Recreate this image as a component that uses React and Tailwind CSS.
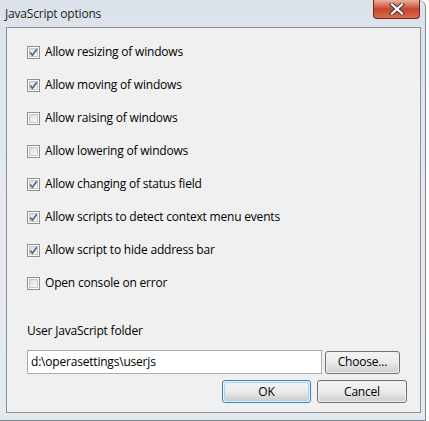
import React from 'react';

const options = [
  { label: 'Allow resizing of windows', checked: true },
  { label: 'Allow moving of windows', checked: true },
  { label: 'Allow raising of windows', checked: false },
  { label: 'Allow lowering of windows', checked: false },
  { label: 'Allow changing of status field', checked: true },
  { label: 'Allow scripts to detect context menu events', checked: true },
  { label: 'Allow script to hide address bar', checked: true },
  { label: 'Open console on error', checked: false },
];

const font = { fontFamily: '"Open Sans", "Noto Sans", sans-serif' };

const Checkbox = ({ checked }) => (
  <div className="w-[13px] h-[13px] border border-[#8e8f8f] bg-white p-[1px] shrink-0">
    <div className="relative w-full h-full border border-[#c6c6c6] bg-gradient-to-br from-[#dcdcdc] to-[#fbfbfb]">
      {checked && (
        <svg className="absolute -left-[1px] -top-[1px]" width="9" height="9" viewBox="0 0 9 9">
          <path d="M1.2 4.6 L3.4 7.2 L7.8 1.2" fill="none" stroke="#4b5f95" strokeWidth="1.6" />
        </svg>
      )}
    </div>
  </div>
);

const Button = ({ children, primary, className }) => (
  <button
    className={`h-[23px] rounded-[3px] border text-[12px] text-black p-[1px] ${primary ? 'border-[#3c7fb1]' : 'border-[#707070]'} ${className}`}
  >
    <div
      className={`h-full rounded-[2px] flex items-center justify-center bg-gradient-to-b from-[#f2f2f2] via-[#ebebeb] to-[#cfcfcf] ${primary ? 'border border-[#9fd6f5]' : ''}`}
    >
      {children}
    </div>
  </button>
);

export default function App() {
  return (
    <div className="w-[429px] h-[421px] bg-white overflow-hidden tracking-[-0.2px]" style={font}>
      <div className="relative w-[426px] h-[421px] rounded-tr-[7px] border-r border-b border-[#7d8892] bg-gradient-to-b from-[#dbe2ea] via-[#e6eaef] to-[#e4e9ee] flex flex-col">
        {/* title bar */}
        <div className="h-[27px] flex items-center pl-[5px] text-[12px] text-[#1e1e1e] shrink-0">
          JavaScript options
        </div>
        <div className="absolute left-[373px] top-0 w-[47px] h-[19px] rounded-b-[4px] border border-t-0 border-[#6b2a1f] bg-gradient-to-b from-[#eab0a0] via-[#c8442c] to-[#d86a4c] flex items-center justify-center">
          <svg width="16" height="12" viewBox="0 0 16 12">
            <path d="M3 1.5 L13 10.5 M13 1.5 L3 10.5" stroke="#3b3b3b" strokeWidth="4.2" strokeLinecap="square" />
            <path d="M3 1.5 L13 10.5 M13 1.5 L3 10.5" stroke="#ffffff" strokeWidth="2.2" strokeLinecap="square" />
          </svg>
        </div>

        {/* content panel */}
        <div className="ml-[6px] w-[415px] h-[386px] border border-[#8a9099] bg-[#f0f0f0] flex flex-col pl-[20px] pt-[8px]">
          {options.map((o) => (
            <div key={o.label} className="h-[33px] flex items-center gap-[5px] text-[12px] text-black">
              <Checkbox checked={o.checked} />
              <span className="leading-none -mt-[1px]">{o.label}</span>
            </div>
          ))}
          <div className="h-[31px] flex items-end text-[12px] text-black leading-none pb-[1px] mt-[7px]">
            User JavaScript folder
          </div>
          <div className="flex items-center mt-[12px] gap-[3px]">
            <div className="w-[295px] h-[24px] border border-[#abadb3] border-t-[#a3a6ad] bg-white flex items-center pl-[3px] text-[12px] text-black">
              d:\operasettings\userjs
            </div>
            <Button className="w-[75px]">Choose...</Button>
          </div>
          <div className="flex mt-[6px] ml-[195px] gap-[6px]">
            <Button primary className="w-[89px]">OK</Button>
            <Button className="w-[90px]">Cancel</Button>
          </div>
        </div>
      </div>
    </div>
  );
}
